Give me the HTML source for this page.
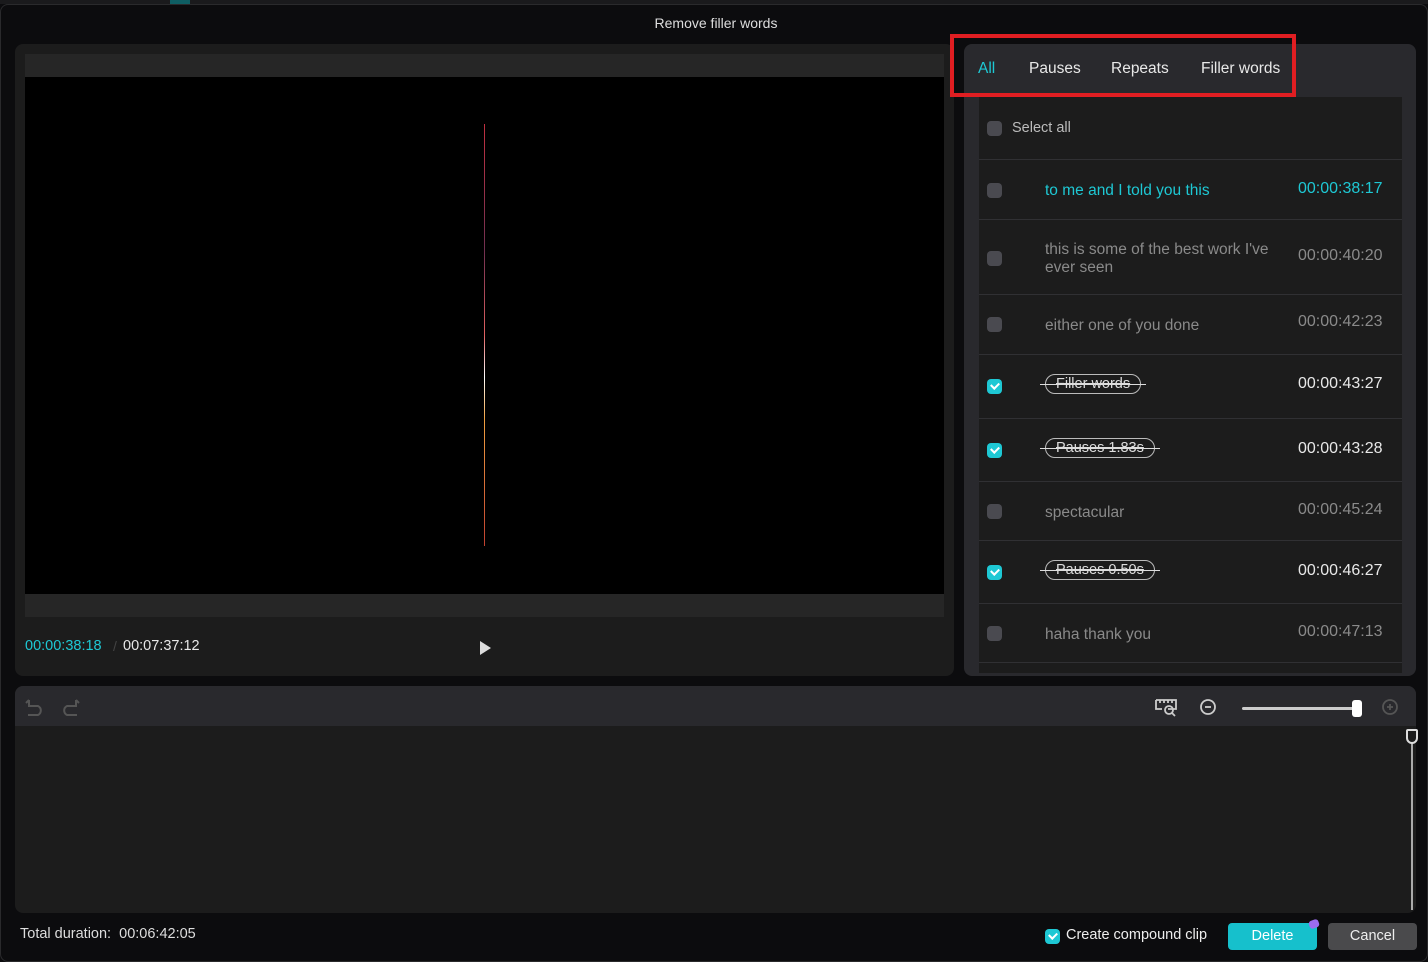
<!DOCTYPE html>
<html><head><style>
*{margin:0;padding:0;box-sizing:border-box}
body{width:1428px;height:962px;background:#0c0c0e;font-family:"Liberation Sans",sans-serif;position:relative;overflow:hidden;color:#ddd}
.a{position:absolute}
.cb{position:absolute;left:8px;width:15px;height:15px;border-radius:4px;background:#4a4a50}
.cb.on{background:#1ec8d4}
.cb.on::after{content:"";position:absolute;left:4px;top:3px;width:6px;height:4px;border-left:2px solid #fff;border-bottom:2px solid #fff;transform:rotate(-45deg)}
.row{position:absolute;left:0;width:423px;border-bottom:1px solid #303033}
.txt{position:absolute;left:66px;font-size:15.5px;color:#8a8a8a;line-height:18px}
.tm{position:absolute;left:319px;font-size:16px;color:#8a8a8a}
.pill{position:absolute;left:66px;border:1.5px solid #bbb;border-radius:12px;padding:1px 10px;font-size:14.5px;color:#ddd;text-decoration:line-through}
.pill::before{content:"";position:absolute;left:-6px;right:-6px;top:50%;border-top:1.5px solid #ddd}
.tab{position:absolute;top:60px;font-size:15.5px;color:#e8e8e8;font-weight:500}
</style></head><body>
<div class="a" style="left:0;top:0;width:1428px;height:4px;background:#1a1a1c"></div>
<div class="a" style="left:170px;top:0;width:20px;height:4px;background:#0f5e63"></div>
<div class="a" style="left:0;top:4px;width:1428px;height:958px;border-radius:8px;background:#0c0c0e;border:1px solid #2a2a2c"></div>
<div class="a" style="left:0;top:15px;width:1432px;text-align:center;font-size:14px;color:#ddd">Remove filler words</div>

<div class="a" style="left:15px;top:44px;width:939px;height:632px;background:#1c1c1c;border-radius:8px"></div>
<div class="a" style="left:25px;top:54px;width:919px;height:563px;background:#262626"></div>
<div class="a" style="left:25px;top:77px;width:919px;height:517px;background:#000"></div>
<div class="a" style="left:484px;top:124px;width:1px;height:422px;background:linear-gradient(#c03040,#703050 30%,#e06060 50%,#fff 60%,#f0a040 70%,#c04030 100%)"></div>
<div class="a" style="left:25px;top:638px;font-size:14.5px;color:#1ec8d4">00:00:38:18</div>
<div class="a" style="left:113px;top:638px;font-size:14px;color:#444">/</div>
<div class="a" style="left:123px;top:638px;font-size:14.5px;color:#e8e8e8">00:07:37:12</div>
<div class="a" style="left:480px;top:641px;width:0;height:0;border-left:11px solid #ddd;border-top:7px solid transparent;border-bottom:7px solid transparent"></div>

<div class="a" style="left:964px;top:44px;width:452px;height:632px;background:#29292d;border-radius:8px"></div>
<div class="tab" style="left:978px;color:#1ec8d4">All</div>
<div class="tab" style="left:1029px">Pauses</div>
<div class="tab" style="left:1111px">Repeats</div>
<div class="tab" style="left:1201px">Filler words</div>
<div class="a" style="left:950px;top:34px;width:346px;height:63px;border:4px solid #e01e22"></div>

<div class="a" style="left:979px;top:97px;width:423px;height:576px;background:#1c1c1c;overflow:hidden">
 <div class="row" style="top:0;height:63px"><div class="cb" style="top:24px"></div><div class="a" style="left:33px;top:23px;font-size:14.5px;color:#bbb">Select all</div></div>
 <div class="row" style="top:63px;height:60px"><div class="cb" style="top:23px"></div><div class="txt" style="top:22px;color:#1ec8d4">to me and I told you this</div><div class="tm" style="top:20px;color:#1ec8d4">00:00:38:17</div></div>
 <div class="row" style="top:123px;height:75px"><div class="cb" style="top:31px"></div><div class="txt" style="top:21px">this is some of the best work I've<br>ever seen</div><div class="tm" style="top:27px">00:00:40:20</div></div>
 <div class="row" style="top:198px;height:60px"><div class="cb" style="top:22px"></div><div class="txt" style="top:22px">either one of you done</div><div class="tm" style="top:18px">00:00:42:23</div></div>
 <div class="row" style="top:258px;height:64px"><div class="cb on" style="top:24px"></div><div class="pill" style="top:19px">Filler words</div><div class="tm" style="top:20px;color:#e8e8e8">00:00:43:27</div></div>
 <div class="row" style="top:322px;height:63px"><div class="cb on" style="top:24px"></div><div class="pill" style="top:19px">Pauses 1.83s</div><div class="tm" style="top:21px;color:#e8e8e8">00:00:43:28</div></div>
 <div class="row" style="top:385px;height:59px"><div class="cb" style="top:22px"></div><div class="txt" style="top:22px">spectacular</div><div class="tm" style="top:19px">00:00:45:24</div></div>
 <div class="row" style="top:444px;height:63px"><div class="cb on" style="top:24px"></div><div class="pill" style="top:19px">Pauses 0.50s</div><div class="tm" style="top:21px;color:#e8e8e8">00:00:46:27</div></div>
 <div class="row" style="top:507px;height:59px"><div class="cb" style="top:22px"></div><div class="txt" style="top:22px">haha thank you</div><div class="tm" style="top:19px">00:00:47:13</div></div>
</div>

<div class="a" style="left:15px;top:686px;width:1401px;height:227px;background:#1c1c1c;border-radius:8px;overflow:hidden">
 <div class="a" style="left:0;top:0;width:1401px;height:40px;background:#29292d"></div>
</div>
<svg class="a" style="left:24px;top:696px" width="70" height="20" fill="none" stroke="#555" stroke-width="2"><path d="M5 4v6h9a5 5 0 010 9H4M5 4l-3 3"/><path d="M58 4v6h-9a5 5 0 000 9h10M58 4l3 3" transform="translate(-6 0)"/></svg>
<svg class="a" style="left:1154px;top:696px" width="250" height="22" fill="none" stroke="#ccc" stroke-width="1.8">
 <path d="M2 4h20v9H14M2 4v9h6M6 4v3M10 4v3M14 4v3M18 4v3"/><circle cx="15" cy="14" r="4"/><path d="M18 17l3 3"/>
 <circle cx="54" cy="11" r="7"/><path d="M51 11h6"/>
 <circle cx="236" cy="11" r="7" stroke="#555"/><path d="M233 11h6M236 8v6" stroke="#555"/>
</svg>
<div class="a" style="left:1242px;top:707px;width:115px;height:3px;background:#ccc;border-radius:2px"></div>
<div class="a" style="left:1352px;top:700px;width:10px;height:17px;background:#fff;border-radius:3px"></div>
<div class="a" style="left:1411px;top:740px;width:2px;height:170px;background:#aaa"></div>
<div class="a" style="left:1406px;top:729px;width:12px;height:15px;border:2px solid #ddd;border-radius:2px 2px 6px 6px;background:#1c1c1c"></div>

<div class="a" style="left:20px;top:926px;font-size:14.5px;color:#ddd">Total duration:&nbsp; 00:06:42:05</div>
<div class="cb on" style="left:1045px;top:929px"></div>
<div class="a" style="left:1066px;top:927px;font-size:14.5px;color:#eee;font-weight:500">Create compound clip</div>
<div class="a" style="left:1228px;top:923px;width:89px;height:27px;background:#16c0cc;border-radius:4px;color:#fff;font-size:14.5px;text-align:center;line-height:27px">Delete</div>
<div class="a" style="left:1309px;top:920px;width:10px;height:8px;background:#9b6cf0;border-radius:3px;transform:rotate(-20deg)"></div>
<div class="a" style="left:1328px;top:923px;width:89px;height:27px;background:#4a4a4c;border-radius:4px;color:#eee;font-size:14.5px;text-align:center;line-height:27px">Cancel</div>
</body></html>
